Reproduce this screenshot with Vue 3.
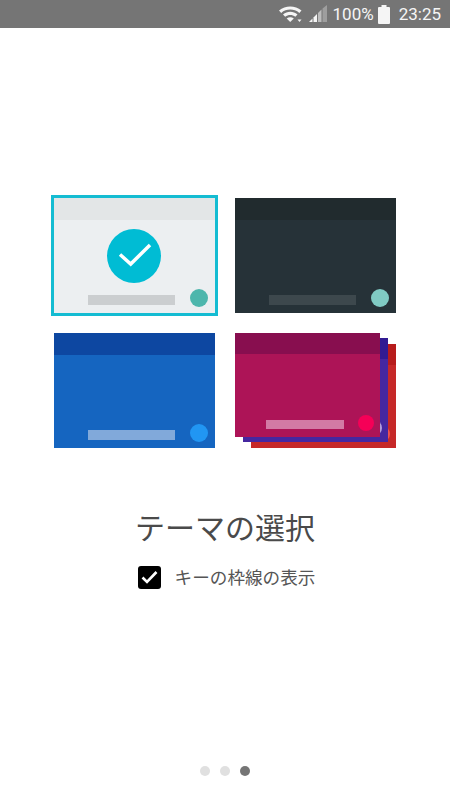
<template>
  <div class="screen">
    <header class="status-bar">
      <svg class="wifi" width="23" height="18" viewBox="0 0 23 18">
        <path d="M0 5.500C6.500 0 16 0 22.500 5.500l-2.200 2.400C15 3.500 7.500 3.500 2.200 7.900z" fill="#f5f5f5" />
        <path d="M4 9.500c4.300-3.600 10.200-3.600 14.500 0l-2.200 2.300c-3-2.500-7.100-2.500-10.100 0z" fill="#f5f5f5" />
        <path d="M7.700 13.400c2.200-1.700 4.900-1.700 7.100 0L11.200 17z" fill="#f5f5f5" />
        <path d="M18.500 14.500h4l-2 2.500z" fill="#f5f5f5" />
      </svg>
      <svg class="signal" width="19" height="18" viewBox="0 0 19 18">
        <path d="M0 17l3.500-3.500V17z" fill="#f5f5f5" />
        <path d="M4.500 12.500 8 9v8H4.500z" fill="#f5f5f5" />
        <path d="M9 8l3.500-3.500V17H9z" fill="#bdbdbd" />
        <path d="M13.500 3.500 18 0v17h-4.500z" fill="#9e9e9e" />
      </svg>
      <span class="percent">100%</span>
      <svg class="battery" width="12" height="19" viewBox="0 0 12 19">
        <path d="M3.500 0h5v2H11a1 1 0 0 1 1 1v15a1 1 0 0 1-1 1H1a1 1 0 0 1-1-1V3a1 1 0 0 1 1-1h2.500z" fill="#f5f5f5" />
      </svg>
      <span class="clock">23:25</span>
    </header>

    <main class="content">
      <div class="themes">
        <div class="theme light selected">
          <div class="theme-head"></div>
          <span class="theme-check">
            <svg width="36" height="36" viewBox="0 0 36 36">
              <path d="M4 16.500 14.700 26 34 7" fill="none" stroke="#fff" stroke-width="3.500" />
            </svg>
          </span>
          <div class="theme-foot"><span class="bar"></span><span class="dot"></span></div>
        </div>

        <div class="theme dark">
          <div class="theme-head"></div>
          <div class="theme-foot"><span class="bar"></span><span class="dot"></span></div>
        </div>

        <div class="theme blue">
          <div class="theme-head"></div>
          <div class="theme-foot"><span class="bar"></span><span class="dot"></span></div>
        </div>

        <div class="stack">
          <div class="stack-card red">
            <div class="stack-head"></div>
            <span class="stack-dot"></span>
          </div>
          <div class="stack-card purple">
            <div class="stack-head"></div>
            <span class="stack-dot"></span>
          </div>
          <div class="stack-card pink">
            <div class="stack-head"></div>
            <span class="stack-bar"></span>
            <span class="stack-dot"></span>
          </div>
        </div>
      </div>

      <h1 class="title">テーマの選択</h1>

      <label class="border-option">
        <span class="checkbox">
          <svg width="17" height="14" viewBox="0 0 17 14">
            <path d="M1.500 7.500l4.500 4.500L15.500 2" fill="none" stroke="#fff" stroke-width="2.600" />
          </svg>
        </span>
        <span class="border-label">キーの枠線の表示</span>
      </label>
    </main>

    <footer class="pager">
      <span v-for="n in 3" :key="n" class="page-dot" :class="{ active: n === current }"></span>
    </footer>
  </div>
</template>

<script setup>
import { ref } from 'vue'

const current = ref(3)
</script>

<style>
body {
  background: #fff;
}
</style>

<style scoped>
.screen {
  width: 450px;
  height: 800px;
  display: flex;
  flex-direction: column;
  background: #fff;
  overflow: hidden;
  font-family: "Noto Sans CJK JP", "Noto Sans", sans-serif;
}

.status-bar {
  height: 28px;
  flex: none;
  box-sizing: border-box;
  padding-right: 9px;
  display: flex;
  align-items: center;
  justify-content: flex-end;
  background: #757575;
  color: #f5f5f5;
  font-family: Roboto, sans-serif;
  font-size: 17px;
}

.wifi {
  margin-right: 7px;
}

.signal {
  margin-right: 5px;
}

.percent {
  margin-right: 4px;
}

.battery {
  margin-right: 9px;
}

.content {
  flex: 1;
  padding-top: 170px;
  display: flex;
  flex-direction: column;
  align-items: center;
}

.themes {
  display: grid;
  grid-template-columns: 161px 161px;
  grid-auto-rows: 115px;
  gap: 20px;
}

.theme {
  position: relative;
  display: flex;
  flex-direction: column;
}

.theme-head {
  height: 22px;
}

.theme-foot {
  margin-top: auto;
  height: 18px;
  padding: 0 16px 6.5px 34px;
  display: flex;
  align-items: flex-end;
  justify-content: space-between;
}

.bar {
  width: 87px;
  height: 10px;
  margin-bottom: 1.5px;
}

.dot {
  width: 18px;
  height: 18px;
  border-radius: 50%;
  margin-right: -9px;
}

.selected {
  outline: 3px solid #14bcd2;
}

.theme-check {
  position: absolute;
  left: 53px;
  top: 31px;
  width: 54px;
  height: 54px;
  border-radius: 50%;
  background: #00bcd4;
  display: flex;
  align-items: center;
  justify-content: center;
}

.light { background: #eceff1; }
.light .theme-head { background: #e3e6e7; }
.light .bar { background: #cbced0; }
.light .dot { background: #4db6ac; }

.dark { background: #263238; }
.dark .theme-head { background: #212b2e; }
.dark .bar { background: #3d484d; }
.dark .dot { background: #80cbc4; }

.blue { background: #1565c0; }
.blue .theme-head { background: #0d47a1; }
.blue .bar { background: #81a9da; }
.blue .dot { background: #2196f3; }

.stack {
  position: relative;
}

.stack-card {
  position: absolute;
  width: 145px;
  height: 104px;
}

.stack-head {
  height: 21px;
}

.stack-dot {
  position: absolute;
  right: 6px;
  bottom: 6px;
  width: 16px;
  height: 16px;
  border-radius: 50%;
}

.stack-bar {
  position: absolute;
  left: 31px;
  top: 87px;
  width: 78px;
  height: 9px;
  background: #d37aa5;
}

.red { left: 16px; top: 11px; background: #c62828; }
.red .stack-head { background: #b71c1c; }
.red .stack-dot { background: #ef5350; }

.purple { left: 8px; top: 5px; background: #4527a0; }
.purple .stack-head { background: #311b92; }
.purple .stack-dot { background: #b39ddb; }

.pink { left: 0; top: 0; background: #ad1457; }
.pink .stack-head { background: #880e4f; }
.pink .stack-dot { background: #f50057; }

.title {
  margin: 57px 0 0;
  font-size: 30px;
  line-height: 42px;
  font-weight: 400;
  color: #4a4a4a;
}

.border-option {
  margin-top: 18px;
  padding-left: 3px;
  display: flex;
  align-items: center;
  gap: 14px;
}

.checkbox {
  width: 23px;
  height: 23px;
  border-radius: 3px;
  background: #000;
  display: flex;
  align-items: center;
  justify-content: center;
}

.border-label {
  font-size: 17.6px;
  line-height: 24px;
  color: #555;
}

.pager {
  flex: none;
  box-sizing: border-box;
  height: 34px;
  padding-bottom: 24px;
  display: flex;
  justify-content: center;
  gap: 10px;
}

.page-dot {
  width: 10px;
  height: 10px;
  border-radius: 50%;
  background: #e0e0e0;
}

.page-dot.active {
  background: #757575;
}
</style>
